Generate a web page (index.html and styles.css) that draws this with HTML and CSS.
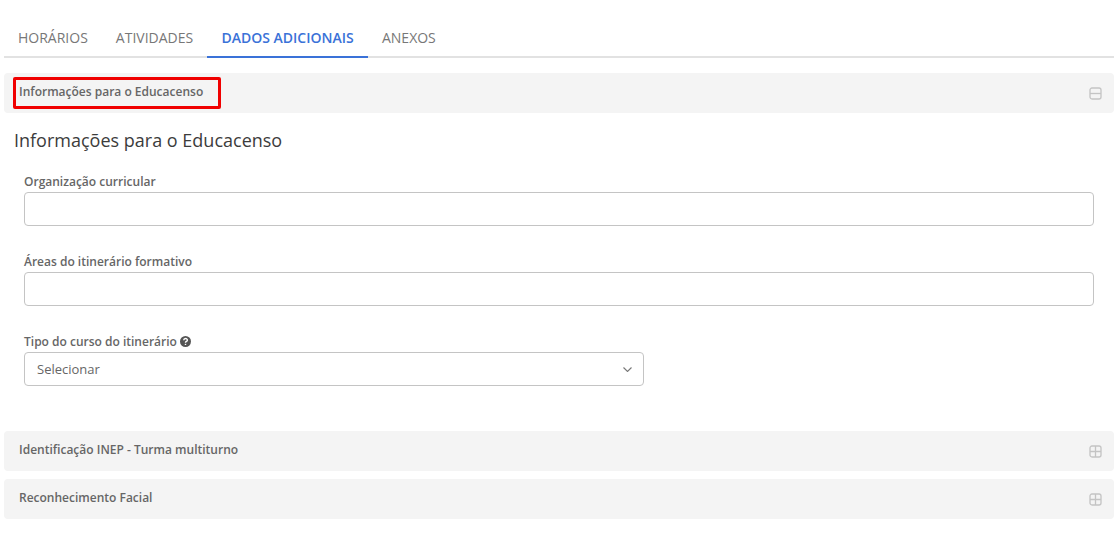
FILE: index.html
```html
<!DOCTYPE html>
<html lang="pt-BR">
<head>
    <meta charset="UTF-8">
    <meta name="viewport" content="width=device-width, initial-scale=1.0">
    <title>Dados adicionais</title>
    <link rel="stylesheet" href="styles.css">
</head>
<body>
    <div class="container">
        <ul class="tabs">
            <li class="tab">HORÁRIOS</li>
            <li class="tab">ATIVIDADES</li>
            <li class="tab active">DADOS ADICIONAIS</li>
            <li class="tab">ANEXOS</li>
        </ul>

        <div class="panel-header first">
            <span class="panel-title">Informações para o Educacenso</span>
            <span class="highlight"></span>
            <svg class="toggle" width="13" height="13" viewBox="0 0 13 13">
                <rect x="1" y="1" width="11" height="11" rx="2"/>
                <path d="M1 6.5h11"/>
            </svg>
        </div>

        <div class="panel-body">
            <h2>Informações para o Educacenso</h2>
            <div class="field">
                <label>Organização curricular</label>
                <input type="text">
            </div>
            <div class="field">
                <label>Áreas do itinerário formativo</label>
                <input type="text">
            </div>
            <div class="field short">
                <label>Tipo do curso do itinerário
                    <svg class="help" width="11" height="11" viewBox="0 0 10 10">
                        <circle cx="5" cy="5" r="5"/>
                        <path d="M3.4 3.9c0-2.1 3.3-2.1 3.3-.1 0 1.2-1.7 1.1-1.7 2.3"/>
                        <path d="M5 7.1v1.1"/>
                    </svg>
                </label>
                <div class="select">
                    <span>Selecionar</span>
                    <svg width="9" height="5" viewBox="0 0 9 5">
                        <path d="M.5.5l4 4 4-4"/>
                    </svg>
                </div>
            </div>
        </div>

        <div class="panel-header">
            <span class="panel-title">Identificação INEP - Turma multiturno</span>
            <svg class="toggle" width="13" height="13" viewBox="0 0 13 13">
                <rect x="1" y="1" width="11" height="11" rx="2"/>
                <path d="M1 6.5h11M6.5 1v11"/>
            </svg>
        </div>
        <div class="panel-header">
            <span class="panel-title">Reconhecimento Facial</span>
            <svg class="toggle" width="13" height="13" viewBox="0 0 13 13">
                <rect x="1" y="1" width="11" height="11" rx="2"/>
                <path d="M1 6.5h11M6.5 1v11"/>
            </svg>
        </div>
    </div>
</body>
</html>
```

FILE: styles.css
```css
* {
    box-sizing: border-box;
}
body {
    margin: 0;
    background-color: white;
    font-family: "Open Sans", Arial, sans-serif;
    color: #555;
}
.container {
    padding: 18px 6px 0 4px;
}
.tabs {
    display: flex;
    list-style: none;
    margin: 0 0 15px;
    padding: 0;
    height: 40px;
    border-bottom: 2px solid #e2e2e2;
}
.tab {
    height: 40px;
    padding: 0 14px;
    font-size: 14px;
    line-height: 40px;
    color: #777;
}
.tab.active {
    padding: 0 14.25px;
    font-weight: 600;
    color: #3a72d8;
    border-bottom: 2px solid #3a72d8;
}
.panel-header {
    position: relative;
    display: flex;
    align-items: center;
    justify-content: space-between;
    height: 40px;
    margin-bottom: 8px;
    padding: 0 12px 0 15px;
    background-color: #f4f4f4;
    border-radius: 4px;
}
.panel-header.first {
    margin-bottom: 0;
}
.panel-title {
    padding-bottom: 3px;
    font-size: 12px;
    font-weight: 600;
    color: #666;
}
.highlight {
    position: absolute;
    left: 9px;
    top: 4px;
    width: 208px;
    height: 32px;
    border: 3px solid #f00000;
    border-radius: 2px;
}
.toggle {
    margin-top: 1px;
}
.toggle rect,
.toggle path {
    fill: none;
    stroke: #c4c4c4;
    stroke-width: 1.3;
}
.panel-body {
    padding: 0 20px 45px;
}
h2 {
    margin: 15px 0 22px -10px;
    font-size: 18px;
    font-weight: 400;
    line-height: 24px;
    color: #3c3c3c;
}
.field {
    margin-bottom: 28px;
}
.field.short {
    width: 620px;
    margin-bottom: 0;
}
label {
    display: block;
    height: 16px;
    margin-bottom: 2px;
    font-size: 12px;
    font-weight: 600;
    line-height: 16px;
    color: #666;
}
input,
.select {
    display: block;
    width: 100%;
    height: 34px;
    background-color: white;
    border: 1px solid #c4c4c4;
    border-radius: 4px;
}
.select {
    display: flex;
    align-items: center;
    justify-content: space-between;
    padding: 0 11px 0 12px;
    font-size: 13px;
    color: #666;
}
.select svg path {
    fill: none;
    stroke: #777;
    stroke-width: 1.1;
}
.help {
    vertical-align: -1px;
}
.help circle {
    fill: #555;
}
.help path {
    fill: none;
    stroke: white;
    stroke-width: 1.3;
}
```
